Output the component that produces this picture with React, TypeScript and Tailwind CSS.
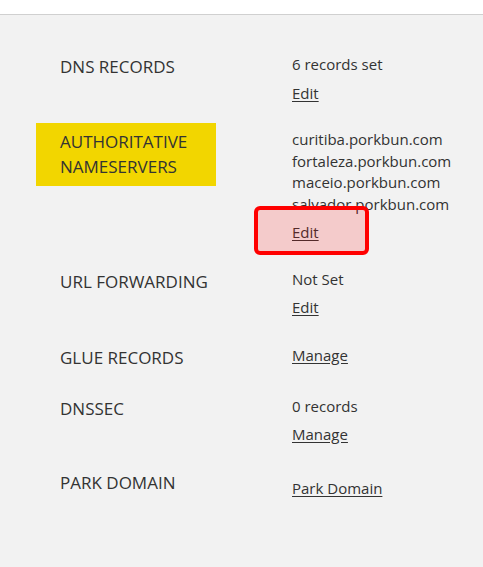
const font = { fontFamily: '"Open Sans", "Noto Sans", sans-serif' };

function Row({
  label,
  lines,
  link,
  top,
  highlight,
  boxed,
  linkGap = "mt-[7px]",
}: {
  label: string[];
  lines: string[];
  link: string;
  top: string;
  highlight?: boolean;
  boxed?: boolean;
  linkGap?: string;
}) {
  return (
    <div className={`flex items-start ${top}`}>
      <div className="w-[232px] shrink-0">
        {highlight ? (
          <div className="-ml-[24px] -my-[6.5px] w-[180px] bg-[#f2d600] px-[24px] py-[6.5px] text-[17px] leading-[25px] text-[#333]">
            {label.map((l) => (
              <div key={l}>{l}</div>
            ))}
          </div>
        ) : (
          <div className="text-[17px] leading-[25px] text-[#333]">
            {label.map((l) => (
              <div key={l}>{l}</div>
            ))}
          </div>
        )}
      </div>
      <div className="text-[15px] leading-[21.5px] text-[#333]">
        {lines.map((l) => (
          <div key={l}>{l}</div>
        ))}
        <div className={lines.length ? linkGap : ""}>
          <span className="relative inline-block">
            <a href="#" className="underline underline-offset-2">
              {link}
            </a>
            {boxed && (
              <span className="pointer-events-none absolute -left-[38px] -top-[16px] h-[49px] w-[115px] rounded-[6px] border-4 border-[#ff0000] bg-[rgba(255,0,0,0.16)]" />
            )}
          </span>
        </div>
      </div>
    </div>
  );
}

export default function App() {
  return (
    <div className="min-h-screen bg-[#f2f2f2]" style={font}>
      <div className="h-[15px] border-b border-[#d0d0d0] bg-white" />
      <div className="pl-[60px]">
        <Row label={["DNS RECORDS"]} lines={["6 records set"]} link="Edit" top="mt-[39px]" />
        <Row
          label={["AUTHORITATIVE", "NAMESERVERS"]}
          lines={["curitiba.porkbun.com", "fortaleza.porkbun.com", "maceio.porkbun.com", "salvador.porkbun.com"]}
          link="Edit"
          top="mt-[25px]"
          highlight
          boxed
        />
        <Row label={["URL FORWARDING"]} lines={["Not Set"]} link="Edit" top="mt-[25px]" />
        <Row label={["GLUE RECORDS"]} lines={[]} link="Manage" top="mt-[26px]" />
        <Row label={["DNSSEC"]} lines={["0 records"]} link="Manage" top="mt-[26.5px]" linkGap="mt-[6px]" />
        <div className="mt-[24.5px] flex items-start">
          <div className="w-[232px] shrink-0 text-[17px] leading-[25px] text-[#333]">PARK DOMAIN</div>
          <div className="mt-[8px] text-[15px] leading-[21.5px] text-[#333]">
            <a href="#" className="underline underline-offset-2">
              Park Domain
            </a>
          </div>
        </div>
      </div>
    </div>
  );
}
